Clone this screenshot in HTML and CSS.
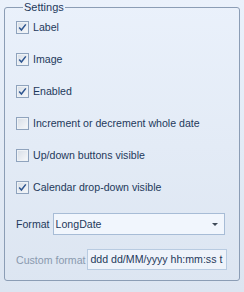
FILE: index.html
```html
<!DOCTYPE html>
<html lang="en">
<head>
  <meta charset="UTF-8">
  <title>Settings</title>
  <link rel="stylesheet" href="styles.css">
</head>
<body>

<fieldset class="group">
  <legend>Settings</legend>

  <div class="checks">
    <label class="check"><span class="box on"><svg viewBox="0 0 11 11"><path d="M2.2 5.6 L4.4 8 L8.8 2.4"/></svg></span>Label</label>
    <label class="check"><span class="box on"><svg viewBox="0 0 11 11"><path d="M2.2 5.6 L4.4 8 L8.8 2.4"/></svg></span>Image</label>
    <label class="check"><span class="box on"><svg viewBox="0 0 11 11"><path d="M2.2 5.6 L4.4 8 L8.8 2.4"/></svg></span>Enabled</label>
    <label class="check"><span class="box"></span>Increment or decrement whole date</label>
    <label class="check"><span class="box"></span>Up/down buttons visible</label>
    <label class="check"><span class="box on"><svg viewBox="0 0 11 11"><path d="M2.2 5.6 L4.4 8 L8.8 2.4"/></svg></span>Calendar drop-down visible</label>
  </div>

  <div class="field">
    <span class="lbl">Format</span>
    <div class="combo">
      <span>LongDate</span>
      <span class="arrow"></span>
    </div>
  </div>

  <div class="field custom">
    <span class="lbl muted">Custom format</span>
    <div class="textbox">ddd dd/MM/yyyy hh:mm:ss t</div>
  </div>
</fieldset>

</body>
</html>
```

FILE: styles.css
```css
html, body { height: 100%; }
body {
  margin: 0;
  background: linear-gradient(#eaf1fb, #dce5f1);
  font-family: "Liberation Sans", Arial, sans-serif;
  font-size: 10.6px;
  color: #1e395b;
  overflow: hidden;
}

.group {
  margin: 0 4px;
  height: 281px;
  box-sizing: border-box;
  border: 1px solid #8b9db5;
  border-radius: 3px;
  padding: 0 11px;
}
.group legend { padding: 0 1px; margin-left: 7px; line-height: 14px; font-size: 11px; }

.checks { display: flex; flex-direction: column; margin-top: -3px; }
.check { display: flex; align-items: center; height: 32px; gap: 4px; }
.box {
  width: 11px; height: 11px;
  border: 1px solid #8fa3bd;
  background: linear-gradient(135deg, #d6dde6, #f7f9fb);
  box-shadow: inset 0 0 0 1px #eef2f6;
  display: flex; align-items: center; justify-content: center;
}
.box svg { width: 11px; height: 11px; }
.box path { fill: none; stroke: #2d5590; stroke-width: 1.5; }

.field { display: flex; align-items: center; gap: 3px; margin-top: 10px; }
.lbl { white-space: nowrap; }
.combo {
  width: 162px; height: 20px;
  border: 1px solid #a7bcd6;
  background: #f1f6fd;
  display: flex; align-items: center; justify-content: space-between;
  padding: 0 6px 0 2px;
}
.arrow {
  width: 0; height: 0;
  border-left: 3px solid transparent;
  border-right: 3px solid transparent;
  border-top: 3px solid #3f4a58;
}
.custom { margin-top: 14px; gap: 2px; }
.muted { color: #8a99ae; }
.textbox {
  width: 134px; height: 19px;
  border: 1px solid #b8cbe1;
  background: #eef3fa;
  padding: 0 2px;
  line-height: 19px;
  white-space: nowrap;
  overflow: hidden;
}
```
